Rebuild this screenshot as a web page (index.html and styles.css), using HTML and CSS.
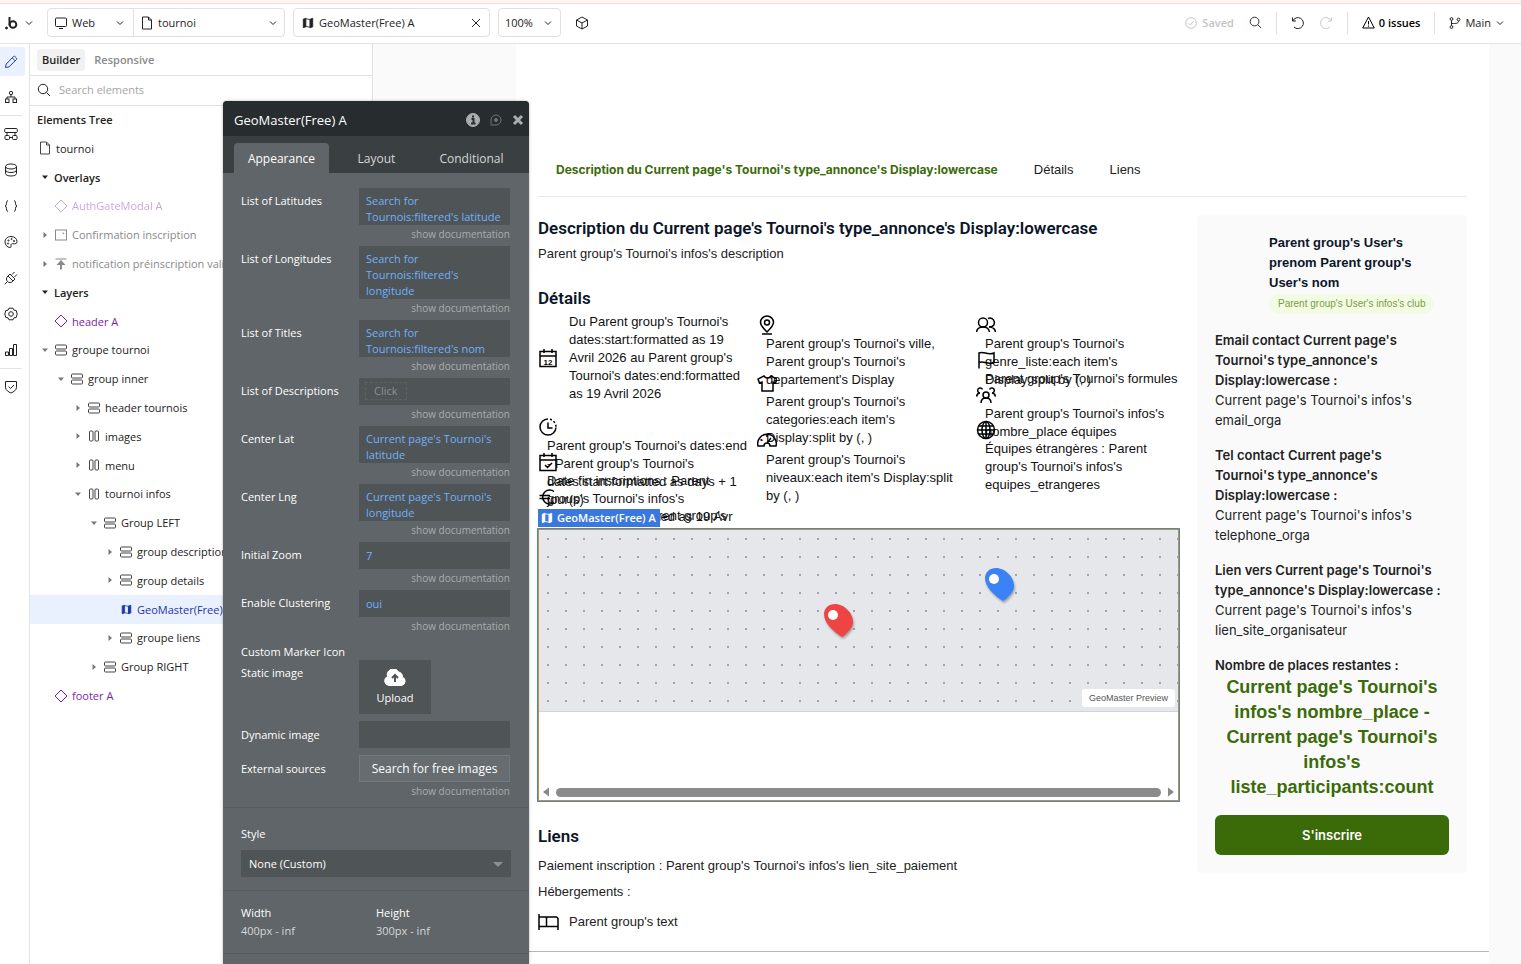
FILE: index.html
```html
<!DOCTYPE html>
<html lang="fr">
  <head>
    <meta charset="utf-8">
    <title>tournoi | Bubble Editor</title>
    <meta name="viewport" content="width=device-width,initial-scale=1">
    <link rel="stylesheet" href="styles.css">
  </head>
  <body>
    <!-- Shared icons -->
    <svg class="sprite" aria-hidden="true">
      <symbol id="chevron" viewBox="0 0 10 10"><path d="M2 3.500 5 6.500 8 3.500"/></symbol>
      <symbol id="page" viewBox="0 0 14 14"><path d="M2.500 1h6l3 3v9h-9zM8.500 1v3h3"/></symbol>
      <symbol id="map" viewBox="0 0 14 14"><path class="solid" d="M1.500 2.500 4.500 1.500v10l-3 1zM9.500 2.500l3-1v10l-3 1z"/><path d="M4.500 2l5 1M4.500 11l5 1M9.500 3v9"/></symbol>
      <symbol id="search" viewBox="0 0 14 14"><circle cx="6" cy="6" r="4.700"/><path d="M9.500 9.500 13 13"/></symbol>
      <symbol id="rows" viewBox="0 0 14 14"><rect x="1.500" y="2" width="11" height="4" rx="1"/><rect x="1.500" y="8" width="11" height="4" rx="1"/></symbol>
      <symbol id="cols" viewBox="0 0 14 14"><rect x="2.500" y="2" width="3.500" height="10" rx="1"/><rect x="8" y="2" width="3.500" height="10" rx="1"/></symbol>
      <symbol id="diamond" viewBox="0 0 14 14"><path d="M7 1l6 6-6 6-6-6z"/></symbol>
      <symbol id="open" viewBox="0 0 8 8"><path class="fill" d="M1 2.500h6L4 6z"/></symbol>
      <symbol id="closed" viewBox="0 0 8 8"><path class="fill" d="M2.500 1v6L6 4z"/></symbol>
    </svg>

    <div class="strip"></div>
    <header class="topbar">
      <button class="logo" aria-label="Menu">
        <svg width="14" height="14" viewBox="0 0 14 14"><path stroke-width="2" d="M4.500 1v8.500"/><circle cx="8" cy="8.500" r="3.300" stroke-width="2"/><circle class="solid" cx="1.500" cy="12" r="1"/></svg>
        <svg class="chev" width="10" height="10"><use href="#chevron"/></svg>
      </button>
      <div class="picker">
        <label class="picker-part picker-device">
          <svg width="14" height="14" viewBox="0 0 14 14"><rect x="1.500" y="2" width="11" height="8.500" rx="1"/><path d="M5 12.500h4"/></svg>
          <select aria-label="Device"><option>Web</option></select>
          <svg class="chev" width="10" height="10"><use href="#chevron"/></svg>
        </label>
        <label class="picker-part picker-page">
          <svg width="14" height="14"><use href="#page"/></svg>
          <select aria-label="Page"><option>tournoi</option></select>
          <svg class="chev" width="10" height="10"><use href="#chevron"/></svg>
        </label>
      </div>
      <div class="picker picker-element">
        <svg width="12" height="12"><use href="#map"/></svg>
        <input type="text" aria-label="Element" value="GeoMaster(Free) A">
        <button aria-label="Clear"><svg width="10" height="10" viewBox="0 0 10 10"><path d="M1 1l8 8M9 1 1 9"/></svg></button>
      </div>
      <label class="picker picker-zoom">
        <select aria-label="Zoom"><option>100%</option></select>
        <svg class="chev" width="10" height="10"><use href="#chevron"/></svg>
      </label>
      <button class="cube" aria-label="Components"><svg width="14" height="14" viewBox="0 0 14 14"><path d="M7 1l5.500 3v6L7 13l-5.500-3V4zM1.500 4 7 7l5.500-3M7 7v6"/></svg></button>
      <div class="actions">
        <span class="saved"><svg width="12" height="12" viewBox="0 0 12 12"><circle cx="6" cy="6" r="5.300"/><path d="M3.500 6.200 5.300 8l3.200-3.800"/></svg>Saved</span>
        <button aria-label="Search"><svg width="13" height="13"><use href="#search"/></svg></button>
        <span class="sep"></span>
        <button aria-label="Undo"><svg width="14" height="14" viewBox="0 0 14 14"><path d="M1.500 1.500V5H5M1.800 5A5.500 5.500 0 1 1 3 11"/></svg></button>
        <button class="redo" aria-label="Redo"><svg width="14" height="14" viewBox="0 0 14 14"><path d="M12.500 1.500V5H9M12.200 5A5.500 5.500 0 1 0 11 11"/></svg></button>
        <span class="sep"></span>
        <button class="issues"><svg width="13" height="13" viewBox="0 0 13 13"><path d="M6.500 1 12.300 12H.7zM6.500 5v3.500M6.500 9.500v1.200"/></svg>0 issues</button>
        <span class="sep"></span>
        <button class="branch">
          <svg width="12" height="12" viewBox="0 0 12 12"><circle cx="2.500" cy="2" r="1.400"/><circle cx="2.500" cy="10" r="1.400"/><circle cx="9.500" cy="2.500" r="1.400"/><path d="M2.500 3.500v5M9.500 4c0 2.500-2 2.500-7 2.500"/></svg>
          Main
          <svg class="chev" width="10" height="10"><use href="#chevron"/></svg>
        </button>
      </div>
    </header>

    <div class="workspace">
      <nav class="rail">
        <button class="rail-item active" aria-label="Design"><svg width="14" height="14" viewBox="0 0 14 14"><path d="M1.500 12.500l.7-3.400 7.300-7.600a1 1 0 0 1 1.400 0l1.600 1.600a1 1 0 0 1 0 1.400L5 11.900zM8.300 3l2.800 2.800"/></svg></button>
        <button class="rail-item" aria-label="Logic"><svg width="14" height="14" viewBox="0 0 14 14"><circle cx="7" cy="3" r="1.700"/><path d="M7 4.700V7M3 9V7h8v2"/><rect x="1.500" y="9" width="3.500" height="3.500"/><rect x="9" y="9" width="3.500" height="3.500"/></svg></button>
        <span class="rail-sep"></span>
        <button class="rail-item" aria-label="Data flow"><svg width="14" height="14" viewBox="0 0 14 14"><rect x=".7" y="1.500" width="12.600" height="4" rx="1"/><rect x="1" y="8.500" width="4.500" height="4" rx="1"/><rect x="8.500" y="8.500" width="4.500" height="4" rx="1"/><path d="M3 5.500v3M11 5.500v3M5.500 10.500h3"/></svg></button>
        <button class="rail-item" aria-label="Data"><svg width="14" height="14" viewBox="0 0 14 14"><ellipse cx="7" cy="3.500" rx="5.500" ry="2.500"/><path d="M1.500 3.500v7C1.500 12 4 13 7 13s5.500-1 5.500-2.500v-7M1.500 7C1.500 8.500 4 9.500 7 9.500s5.500-1 5.500-2.500"/></svg></button>
        <button class="rail-item" aria-label="Code"><svg width="14" height="14" viewBox="0 0 14 14"><path d="M4 1.500C1.500 1.500 3.500 7 1 7c2.500 0 .5 5.500 3 5.500M10 1.500c2.500 0 .5 5.500 3 5.500-2.500 0-.5 5.500-3 5.500"/></svg></button>
        <button class="rail-item" aria-label="Styles"><svg width="14" height="14" viewBox="0 0 14 14"><path d="M7 1.500c-3.500 0-6 2.500-6 5.500s2.500 5.500 5 5.500c1.500 0 1-1.500 1-2.500s1-1.500 2-1.300c2.500.3 4 0 4-2C13 3.500 10.500 1.500 7 1.500z"/><circle cx="4.500" cy="5.500" r=".6"/><circle cx="7.500" cy="4" r=".6"/><circle cx="10" cy="6" r=".6"/><circle cx="4" cy="8.500" r=".6"/></svg></button>
        <button class="rail-item" aria-label="Plugins"><svg width="14" height="14" viewBox="0 0 14 14"><path d="M4 5l5 5c-2 2-4 2-5.500.5S2 7 4 5zM3.500 10.500.8 13.200M4 5l2-2 5 5-2 2M8 3.500 10.500 1M10.500 6 13 3.500"/></svg></button>
        <button class="rail-item" aria-label="Settings"><svg width="14" height="14" viewBox="0 0 14 14"><path d="M5 1.200h4l1 2 2.200.3 1 3.500-1 3.500-2.200.3-1 2H5l-1-2-2.200-.3L.8 7l1-3.500L4 3.200z"/><circle cx="7" cy="7" r="2.300"/></svg></button>
        <button class="rail-item" aria-label="Logs"><svg width="14" height="14" viewBox="0 0 14 14"><path d="M1.500 12.500V9h3v3.500zM5.500 12.500v-7h3v7zM9.500 12.500v-11h3v11z"/></svg></button>
        <span class="rail-sep"></span>
        <button class="rail-item" aria-label="Security"><svg width="14" height="14" viewBox="0 0 14 14"><path d="M1.500 1.500h11v6c0 2.500-3 4.500-5.500 5.500-2.500-1-5.500-3-5.500-5.500zM4.500 6.500l2 2 3.500-3.500"/></svg></button>
      </nav>

      <aside class="tree-panel">
        <div class="modes">
          <button class="mode active">Builder</button>
          <button class="mode">Responsive</button>
        </div>
        <label class="search">
          <svg width="14" height="14"><use href="#search"/></svg>
          <input type="text" placeholder="Search elements" aria-label="Search elements">
        </label>
        <h3 class="tree-title">Elements Tree</h3>
        <ul class="tree">
          <li class="root"><span class="icon"><svg width="14" height="14"><use href="#page"/></svg></span>tournoi</li>
          <li class="section"><span class="caret"><svg width="8" height="8"><use href="#open"/></svg></span>Overlays</li>
          <li class="reusable faded"><span class="caret"></span><span class="icon"><svg width="14" height="14"><use href="#diamond"/></svg></span>AuthGateModal A</li>
          <li class="hidden-el"><span class="caret"><svg width="8" height="8"><use href="#closed"/></svg></span><span class="icon"><svg width="14" height="14" viewBox="0 0 14 14"><rect x="1.500" y="2" width="11" height="10"/><path d="M8.500 5h1.200v1.200"/></svg></span>Confirmation inscription</li>
          <li class="hidden-el"><span class="caret"><svg width="8" height="8"><use href="#closed"/></svg></span><span class="icon"><svg width="14" height="14" viewBox="0 0 14 14"><path d="M1.500 2h11"/><path class="fill" d="M7 3l4.500 5H8v4.500H6V8H2.500z"/></svg></span>notification préinscription validée</li>
          <li class="section"><span class="caret"><svg width="8" height="8"><use href="#open"/></svg></span>Layers</li>
          <li class="reusable"><span class="caret"></span><span class="icon"><svg width="14" height="14"><use href="#diamond"/></svg></span>header A</li>
          <li><span class="caret"><svg width="8" height="8"><use href="#open"/></svg></span><span class="icon"><svg width="14" height="14"><use href="#rows"/></svg></span>groupe tournoi</li>
          <li class="level-2"><span class="caret"><svg width="8" height="8"><use href="#open"/></svg></span><span class="icon"><svg width="14" height="14"><use href="#rows"/></svg></span>group inner</li>
          <li class="level-3"><span class="caret"><svg width="8" height="8"><use href="#closed"/></svg></span><span class="icon"><svg width="14" height="14"><use href="#rows"/></svg></span>header tournois</li>
          <li class="level-3"><span class="caret"><svg width="8" height="8"><use href="#closed"/></svg></span><span class="icon"><svg width="14" height="14"><use href="#cols"/></svg></span>images</li>
          <li class="level-3"><span class="caret"><svg width="8" height="8"><use href="#closed"/></svg></span><span class="icon"><svg width="14" height="14"><use href="#cols"/></svg></span>menu</li>
          <li class="level-3"><span class="caret"><svg width="8" height="8"><use href="#open"/></svg></span><span class="icon"><svg width="14" height="14"><use href="#cols"/></svg></span>tournoi infos</li>
          <li class="level-4"><span class="caret"><svg width="8" height="8"><use href="#open"/></svg></span><span class="icon"><svg width="14" height="14"><use href="#rows"/></svg></span>Group LEFT</li>
          <li class="level-5"><span class="caret"><svg width="8" height="8"><use href="#closed"/></svg></span><span class="icon"><svg width="14" height="14"><use href="#rows"/></svg></span>group description</li>
          <li class="level-5"><span class="caret"><svg width="8" height="8"><use href="#closed"/></svg></span><span class="icon"><svg width="14" height="14"><use href="#rows"/></svg></span>group details</li>
          <li class="level-5 selected"><span class="caret"></span><span class="icon"><svg width="11" height="11"><use href="#map"/></svg></span>GeoMaster(Free) A</li>
          <li class="level-5"><span class="caret"><svg width="8" height="8"><use href="#closed"/></svg></span><span class="icon"><svg width="14" height="14"><use href="#rows"/></svg></span>groupe liens</li>
          <li class="level-4"><span class="caret"><svg width="8" height="8"><use href="#closed"/></svg></span><span class="icon"><svg width="14" height="14"><use href="#rows"/></svg></span>Group RIGHT</li>
          <li class="reusable"><span class="caret"></span><span class="icon"><svg width="14" height="14"><use href="#diamond"/></svg></span>footer A</li>
        </ul>
      </aside>

      <div class="canvas">
        <main class="page">
          <nav class="page-nav">
            <a href="#description" class="current">Description du Current page's Tournoi's type_annonce's Display:lowercase</a>
            <a href="#details">Détails</a>
            <a href="#liens">Liens</a>
          </nav>
          <div class="columns">
            <div class="left">
              <h2 id="description">Description du Current page's Tournoi's type_annonce's Display:lowercase</h2>
              <p class="description">Parent group's Tournoi's infos's description</p>
              <h2 id="details" class="spaced">Détails</h2>

              <!-- Items have a fixed height, long texts run over the next one -->
              <div class="details">
                <div class="details-col">
                  <div class="detail-wide">
                    <svg width="20" height="20" viewBox="0 0 20 20"><path d="M2 3.500h16v15H2zM2 8h16M6 1v4M14 1v4"/><text class="day" x="10" y="16.500" text-anchor="middle">12</text></svg>
                    <p>Du Parent group's Tournoi's dates:start:formatted as 19 Avril 2026 au Parent group's Tournoi's dates:end:formatted as 19 Avril 2026</p>
                  </div>
                  <div class="detail">
                    <svg width="20" height="20" viewBox="0 0 20 20"><path d="M10 2a8 8 0 1 0 8 8.500"/><path d="M10 5.500V11h4.500"/><path stroke-dasharray="2 2" d="M12 2.300a8 8 0 0 1 6 7.500"/></svg>
                    <p>Parent group's Tournoi's dates:end - Parent group's Tournoi's dates:start:formatted as days + 1 jour(s)</p>
                  </div>
                  <div class="detail">
                    <svg width="20" height="20" viewBox="0 0 20 20"><path d="M2 3.500h16v15H2zM2 8h16M6 1v4M14 1v4M7 13l2.500 2.500L14 11"/></svg>
                    <p>Date fin inscriptions : Parent group's Tournoi's infos's dates_limite:formatted as 19 Avr</p>
                  </div>
                  <div class="detail">
                    <svg width="20" height="20" viewBox="0 0 20 20"><path d="M16 4.500A7 7 0 1 0 16 15.500M1.500 8.500H12M1.500 11.500H12"/></svg>
                    <p>Prix inscription : Parent group's</p>
                  </div>
                </div>
                <div class="details-col tall">
                  <div class="detail">
                    <svg width="20" height="20" viewBox="0 0 20 20"><path d="M10 17C6 13 3.500 10.500 3.500 7.500a6.500 6.500 0 0 1 13 0C16.500 10.500 14 13 10 17zM5 19h10"/><circle cx="10" cy="7.500" r="2.500"/></svg>
                    <p>Parent group's Tournoi's ville, Parent group's Tournoi's departement's Display</p>
                  </div>
                  <div class="detail">
                    <svg width="20" height="20" viewBox="0 0 20 20"><path d="M7 3 1 6l1.500 4L5 9v9h11V9l2.500 1L20 6l-6-3c-1.500 2.500-5.500 2.500-7 0z"/></svg>
                    <p>Parent group's Tournoi's categories:each item's Display:split by (, )</p>
                  </div>
                  <div class="detail">
                    <svg width="20" height="20" viewBox="0 0 20 20"><path d="M1 15a9.300 9.300 0 1 1 18 0h-6a3 3 0 0 0-6 0zM10 12l4-5M10 3.500V6M3.500 8.500l2 1.200"/></svg>
                    <p>Parent group's Tournoi's niveaux:each item's Display:split by (, )</p>
                  </div>
                </div>
                <div class="details-col">
                  <div class="detail">
                    <svg width="20" height="20" viewBox="0 0 20 20"><circle cx="7" cy="7.500" r="4.500"/><path d="M.5 17C1 14 3.500 12 7 12s6 2 6.500 5M12 3.500A4.500 4.500 0 1 1 13 12c3.500 0 6 2 6.500 5"/></svg>
                    <p>Parent group's Tournoi's genre_liste:each item's Display:split by (, )</p>
                  </div>
                  <div class="detail">
                    <svg width="20" height="20" viewBox="0 0 20 20"><path d="M3 18.500V3c5-2.500 8 3 15 0v9.500c-7 3-10-2.500-15 0"/></svg>
                    <p class="one-line">Parent group's Tournoi's formules</p>
                  </div>
                  <div class="detail">
                    <svg width="20" height="20" viewBox="0 0 20 20"><circle cx="10" cy="10" r="3"/><path d="M5 18c0-3 2-5 5-5s5 2 5 5M6.500 4.500A2.500 2.500 0 1 0 4 8c-2 0-3 1.500-3.500 3.500M13.500 4.500A2.500 2.500 0 1 1 16 8c2 0 3 1.500 3.500 3.500"/></svg>
                    <p>Parent group's Tournoi's infos's nombre_place équipes</p>
                  </div>
                  <div class="detail">
                    <svg width="20" height="20" viewBox="0 0 20 20"><circle cx="10" cy="10" r="8.500"/><ellipse cx="10" cy="10" rx="4" ry="8.500"/><path d="M10 1.500v17M1.500 10h17M3 6h14M3 14h14"/></svg>
                    <p>Équipes étrangères : Parent group's Tournoi's infos's equipes_etrangeres</p>
                  </div>
                </div>
              </div>

              <div class="geomaster">
                <span class="geomaster-tag"><svg width="12" height="12"><use href="#map"/></svg>GeoMaster(Free) A</span>
                <div class="geomaster-map">
                  <svg class="marker marker-red" width="29" height="33" viewBox="0 0 29 33"><path d="M18 33C9 27 0 19 0 10 0 4 5 0 11 0c9 0 18 9 18 18 0 5-5 11-11 15z"/><circle cx="9" cy="11" r="5"/></svg>
                  <svg class="marker marker-blue" width="29" height="33" viewBox="0 0 29 33"><path d="M18 33C9 27 0 19 0 10 0 4 5 0 11 0c9 0 18 9 18 18 0 5-5 11-11 15z"/><circle cx="9" cy="11" r="5"/></svg>
                  <span class="preview">GeoMaster Preview</span>
                </div>
                <div class="scrollbar">
                  <svg width="8" height="10" viewBox="0 0 8 10"><path d="M7 .5v9L1 5z"/></svg>
                  <span class="thumb"></span>
                  <svg width="8" height="10" viewBox="0 0 8 10"><path d="M1 .5v9L7 5z"/></svg>
                </div>
              </div>

              <h2 id="liens" class="spaced">Liens</h2>
              <p class="link-text">Paiement inscription : Parent group's Tournoi's infos's lien_site_paiement</p>
              <p class="link-text">Hébergements :</p>
              <div class="lodging">
                <svg width="21" height="20" viewBox="0 0 21 20"><path d="M1 2v16M1 14.500h19M20 18V6.500L18.500 5H1M8.500 5v9.500"/></svg>
                <span>Parent group's text</span>
              </div>
            </div>

            <aside class="card">
              <div class="owner">
                <h3>Parent group's User's prenom Parent group's User's nom</h3>
                <span class="club">Parent group's User's infos's club</span>
              </div>
              <dl>
                <dt>Email contact Current page's Tournoi's type_annonce's Display:lowercase :</dt>
                <dd>Current page's Tournoi's infos's email_orga</dd>
                <dt>Tel contact Current page's<br>Tournoi's type_annonce's Display:lowercase :</dt>
                <dd>Current page's Tournoi's infos's telephone_orga</dd>
                <dt>Lien vers Current page's Tournoi's type_annonce's Display:lowercase :</dt>
                <dd>Current page's Tournoi's infos's lien_site_organisateur</dd>
                <dt>Nombre de places restantes :</dt>
                <dd class="places">Current page's Tournoi's infos's nombre_place - Current page's Tournoi's infos's liste_participants:count</dd>
              </dl>
              <button class="signup">S'inscrire</button>
            </aside>
          </div>
        </main>
      </div>

      <!-- Floating property editor -->
      <section class="editor">
        <div class="editor-head">
          <h3>GeoMaster(Free) A</h3>
          <button aria-label="Info"><svg width="14" height="14" viewBox="0 0 14 14"><circle class="solid" cx="7" cy="7" r="6.500"/><path class="cut" d="M5.500 6h2v4.500M5 10.500h4.500M6 3.500h2"/></svg></button>
          <button class="comment" aria-label="Comment"><svg width="12" height="12" viewBox="0 0 12 12"><path d="M1 11V6a5 5 0 1 1 5 5z"/><circle class="solid" cx="6" cy="6" r="1.500"/></svg></button>
          <button aria-label="Close"><svg width="12" height="12" viewBox="0 0 12 12"><path stroke-width="3" d="M2 2l8 8M10 2l-8 8"/></svg></button>
        </div>
        <div class="editor-tabs">
          <button class="active">Appearance</button>
          <button>Layout</button>
          <button>Conditional</button>
        </div>
        <div class="fields">
          <label for="latitudes">List of Latitudes</label>
          <div class="field"><textarea id="latitudes" rows="2">Search for Tournois:filtered's latitude</textarea><a href="#doc">show documentation</a></div>
          <label for="longitudes">List of Longitudes</label>
          <div class="field"><textarea id="longitudes" rows="3">Search for Tournois:filtered's longitude</textarea><a href="#doc">show documentation</a></div>
          <label for="titles">List of Titles</label>
          <div class="field"><textarea id="titles" rows="2">Search for Tournois:filtered's nom</textarea><a href="#doc">show documentation</a></div>
          <label for="descriptions">List of Descriptions</label>
          <div class="field"><div class="empty"><button id="descriptions">Click</button></div><a href="#doc">show documentation</a></div>
          <label for="lat">Center Lat</label>
          <div class="field"><textarea id="lat" rows="2">Current page's Tournoi's latitude</textarea><a href="#doc">show documentation</a></div>
          <label for="lng">Center Lng</label>
          <div class="field"><textarea id="lng" rows="2">Current page's Tournoi's longitude</textarea><a href="#doc">show documentation</a></div>
          <label for="zoom">Initial Zoom</label>
          <div class="field"><input id="zoom" type="text" value="7"><a href="#doc">show documentation</a></div>
          <label for="clustering">Enable Clustering</label>
          <div class="field"><input id="clustering" type="text" value="oui"><a href="#doc">show documentation</a></div>
        </div>
        <div class="image-fields">
          <div class="image-label"><span>Custom Marker Icon</span><label for="upload">Static image</label></div>
          <button id="upload" class="upload">
            <svg width="22" height="17" viewBox="0 0 22 17"><path class="solid" d="M5 16.500a4.700 4.700 0 0 1-1.500-9A6 6 0 0 1 14.500 3a4.500 4.500 0 0 1 4 5A4.500 4.500 0 0 1 17.500 16.500z"/><path class="cut" d="M11 13V6.500M8 9l3-3 3 3"/></svg>
            Upload
          </button>
          <label for="dynamic">Dynamic image</label>
          <input id="dynamic" type="text">
          <label for="external">External sources</label>
          <div class="field"><button id="external" class="free-images">Search for free images</button><a href="#doc">show documentation</a></div>
        </div>
        <div class="style-block">
          <label for="style">Style</label>
          <div class="style-select">
            <select id="style"><option>None (Custom)</option></select>
            <svg width="10" height="10" viewBox="0 0 10 10"><path d="M0 3h10L5 8z"/></svg>
          </div>
        </div>
        <dl class="size">
          <div><dt>Width</dt><dd>400px - inf</dd></div>
          <div><dt>Height</dt><dd>300px - inf</dd></div>
        </dl>
        <div class="editor-rest"></div>
      </section>
    </div>
  </body>
</html>
```
FILE: styles.css
```css
* {
  box-sizing: border-box;
}

body {
  margin: 0;
  height: 100vh;
  display: flex;
  flex-direction: column;
  overflow: hidden;
  font-family: "Open Sans", "Noto Sans", sans-serif;
  font-size: 11px;
  color: #222;
  background: #fff;
}

button, input, select, textarea {
  font: inherit;
  color: inherit;
  background: none;
  border: 0;
  padding: 0;
  margin: 0;
  outline: 0;
}

select {
  appearance: none;
}

h2, h3, p, ul, dl, dd {
  margin: 0;
  padding: 0;
}

a {
  color: inherit;
  text-decoration: none;
}

svg {
  display: block;
  flex: none;
  fill: none;
  stroke: currentColor;
}

.solid {
  fill: currentColor;
}

.fill {
  fill: currentColor;
  stroke: none;
}

.sprite {
  width: 0;
  height: 0;
  position: absolute;
}

/* Top bar */
.strip {
  height: 4px;
  background: #fff4f2;
  border-bottom: 1px solid #e3e3e3;
}

.topbar {
  height: 40px;
  display: flex;
  align-items: center;
  padding: 0 16px 2px 5px;
  border-bottom: 1px solid #e3e3e3;
}

.logo {
  display: flex;
  align-items: center;
  gap: 5px;
  margin-right: 13px;
}

.picker {
  display: flex;
  align-items: center;
  height: 29px;
  margin-right: 8px;
  border: 1px solid #e0e0e0;
  border-radius: 4px;
}

.picker-part {
  display: flex;
  align-items: center;
  gap: 4px;
  height: 100%;
  padding: 0 6px;
}

.picker select, .picker input {
  flex: 1;
  min-width: 0;
}

.picker-device {
  width: 86px;
  padding-right: 8px;
  border-right: 1px solid #e0e0e0;
}

.picker-page {
  width: 150px;
}

.picker-element {
  width: 197px;
  gap: 5px;
  padding: 0 8px;
}

.picker-zoom {
  width: 63px;
  padding: 0 7px 0 6px;
}

.cube {
  margin-left: 6px;
}

.actions {
  display: flex;
  align-items: center;
  gap: 14px;
  margin-left: auto;
}

.saved {
  display: flex;
  align-items: center;
  gap: 5px;
  margin-right: 1px;
  color: #c4c4c4;
  font-weight: 600;
}

.redo {
  color: #c9c9c9;
}

.sep {
  width: 1px;
  height: 22px;
  background: #e0e0e0;
}

.issues, .branch {
  display: flex;
  align-items: center;
  gap: 4px;
}

.issues {
  color: #000;
  font-weight: 600;
}

/* Icon rail */
.workspace {
  flex: 1;
  min-height: 0;
  display: flex;
}

.rail {
  width: 30px;
  display: flex;
  flex-direction: column;
  border-right: 1px solid #e3e3e3;
}

.rail-item {
  display: flex;
  align-items: center;
  width: 25px;
  height: 36px;
  padding-left: 4px;
}

.rail-item.active {
  height: 29px;
  margin: 3px 0;
  color: #2a3ab5;
  background: #e8f1fd;
  border-radius: 0 3px 3px 0;
}

.rail-sep {
  width: 22px;
  height: 1px;
  background: #e3e3e3;
}

/* Elements tree */
.tree-panel {
  width: 343px;
  flex: none;
  border-right: 1px solid #e3e3e3;
}

.modes {
  display: flex;
  align-items: center;
  gap: 4px;
  height: 32px;
  padding: 0 7px;
  border-bottom: 1px solid #e3e3e3;
}

.mode {
  height: 22px;
  padding: 0 5px;
  border-radius: 3px;
  font-weight: 600;
  color: #8a8a8a;
}

.mode.active {
  color: #222;
  background: #f1f1f1;
}

.search {
  display: flex;
  align-items: center;
  gap: 8px;
  height: 30px;
  padding: 0 7px 2px;
  border-bottom: 1px solid #e3e3e3;
}

.search input::placeholder {
  color: #a5a5a5;
}

.tree-title {
  padding: 5px 7px 6px;
  font-size: 11px;
  line-height: 17px;
  font-weight: 600;
}

.tree {
  list-style: none;
  display: grid;
  grid-auto-rows: 1fr;
  height: 576px;
}

.tree li {
  display: flex;
  align-items: center;
  padding-left: 7px;
  white-space: nowrap;
}

.tree .level-2 {
  padding-left: 23px;
}

.tree .level-3 {
  padding-left: 40px;
}

.tree .level-4 {
  padding-left: 56px;
}

.tree .level-5 {
  padding-left: 72px;
}

.caret, .icon {
  display: flex;
  justify-content: center;
  width: 16px;
}

.caret {
  color: #777;
}

.icon {
  margin-right: 3px;
  color: #444;
}

.section {
  font-weight: 600;
}

.section .caret {
  color: #222;
  margin-right: 1px;
}

.reusable, .reusable .icon {
  color: #7a1fa2;
}

.faded {
  opacity: 0.4;
}

.hidden-el, .hidden-el .icon {
  color: #8a8a8a;
}

.tree .selected, .selected .icon {
  color: #1f35a8;
}

.tree .selected {
  background: #e8f1fd;
}

/* Canvas and the page that is edited */
.canvas {
  flex: 1;
  min-width: 0;
  padding: 0 32px 0 143px;
  background: #fafafa;
  overflow: hidden;
}

.page {
  height: 908px;
  padding: 99px 22px 0;
  background: #fff;
  border-bottom: 1px solid #b5b5b5;
  box-shadow: 0 100px #fff;
  font-family: "Liberation Sans", Arial, sans-serif;
  font-size: 13px;
  line-height: 18px;
}

.page-nav {
  display: flex;
  align-items: center;
  gap: 36px;
  height: 54px;
  padding: 0 18px;
  border-bottom: 1px solid #e8e8e8;
}

.page-nav .current {
  font-family: Inter, sans-serif;
  font-size: 12px;
  font-weight: bold;
  color: #3a6b08;
}

.columns {
  display: flex;
  align-items: flex-start;
  gap: 18px;
  margin-top: 18px;
}

.left {
  flex: 1;
  min-width: 0;
}

.left h2 {
  font-family: Roboto, sans-serif;
  font-size: 17px;
  line-height: 26px;
  font-weight: 600;
  color: #0b1529;
}

.left .spaced {
  margin-top: 22px;
}

.description {
  margin-top: 4px;
}

.details {
  display: grid;
  grid-template-columns: 210px 210px 1fr;
  column-gap: 9px;
  height: 218px;
  padding-top: 4px;
  color: #111;
}

.details svg, .lodging svg {
  stroke: #000;
  stroke-width: 1.5;
}

.details .day {
  font: bold 8px "Liberation Sans", sans-serif;
  fill: #000;
  stroke: none;
}

.detail-wide {
  display: flex;
  align-items: center;
  gap: 11px;
  height: 86px;
  margin-bottom: 16px;
}

.detail {
  height: 35px;
}

.detail p {
  padding-left: 9px;
}

.detail .one-line {
  white-space: nowrap;
}

.tall .detail {
  height: 58px;
}

.geomaster {
  position: relative;
  height: 272px;
  display: flex;
  flex-direction: column;
  border: 1px solid #d08a3c;
  outline: 1px solid #3d8fbd;
}

.geomaster-tag {
  position: absolute;
  left: -1px;
  top: -21px;
  display: flex;
  align-items: center;
  gap: 4px;
  height: 18px;
  padding: 0 4px 0 3px;
  color: #fff;
  background: #3b78de;
  font-family: "Open Sans", sans-serif;
  font-size: 11px;
  font-weight: 600;
}

.geomaster-map {
  position: relative;
  height: 182px;
  background: radial-gradient(circle, #9ca3af 1px, transparent 1px) 0 0 / 18px 18px #e5e7eb;
  border-bottom: 1px solid #d1d5db;
}

.marker {
  position: absolute;
  stroke: none;
  filter: drop-shadow(1px 2px 1px rgba(0, 0, 0, 0.3));
}

.marker circle {
  fill: #fff;
}

.marker-red {
  left: 285px;
  top: 74px;
  fill: #ef4444;
}

.marker-blue {
  left: 446px;
  top: 38px;
  fill: #3b82f6;
}

.preview {
  position: absolute;
  right: 3px;
  bottom: 4px;
  padding: 0 7px;
  border-radius: 3px;
  background: #fff;
  color: #555;
  font-size: 9px;
  line-height: 18px;
}

.scrollbar {
  display: flex;
  align-items: center;
  gap: 6px;
  margin-top: auto;
  padding: 0 3px 3px;
  color: #888;
}

.scrollbar svg {
  fill: #888;
  stroke: none;
}

.thumb {
  flex: 1;
  height: 9px;
  border-radius: 5px;
  background: #8b8b8b;
}

.link-text {
  margin-top: 8px;
}

.lodging {
  display: flex;
  align-items: center;
  gap: 10px;
  margin-top: 11px;
}

/* Right card */
.card {
  width: 270px;
  padding: 18px;
  border-radius: 4px;
  background: #fafafa;
  font-size: 13px;
  line-height: 20px;
}

.owner {
  padding-left: 54px;
}

.owner h3 {
  font-size: 13px;
  color: #0b1529;
}

.club {
  display: inline-block;
  padding: 0 9px;
  border-radius: 10px;
  background: #f4fbe4;
  color: #76a03c;
  font-size: 10px;
  white-space: nowrap;
}

.card dl {
  margin-top: 16px;
  font-family: Inter, sans-serif;
}

.card dt {
  font-weight: 600;
}

.card dd {
  margin-bottom: 15px;
}

.card .places {
  font-family: "Liberation Sans", Arial, sans-serif;
  font-size: 18px;
  line-height: 25px;
  font-weight: bold;
  text-align: center;
  color: #3a6b08;
}

.signup {
  width: 100%;
  height: 40px;
  border-radius: 6px;
  background: #3a6b08;
  color: #fff;
  font-family: Inter, sans-serif;
  font-size: 13px;
  font-weight: 600;
}

/* Property editor floats over tree and canvas */
.editor {
  position: absolute;
  left: 223px;
  top: 101px;
  bottom: 0;
  width: 306px;
  display: flex;
  flex-direction: column;
  border-radius: 4px 4px 0 0;
  overflow: hidden;
  background: #5f6568;
  color: #fff;
  box-shadow: 0 0 3px rgba(0, 0, 0, 0.3);
}

.editor-head {
  display: flex;
  align-items: center;
  gap: 10px;
  height: 35px;
  padding: 2px 5px 0 11px;
  background: #272d2f;
  color: #a9adaf;
  flex: none;
}

.editor-head h3 {
  flex: 1;
  font-size: 13px;
  font-weight: normal;
  color: #fff;
}

.editor-head .comment {
  color: #6f7577;
}

.cut {
  stroke: #272d2f;
  stroke-width: 2;
}

.editor-tabs {
  display: grid;
  grid-template-columns: repeat(3, 95px);
  height: 37px;
  padding: 7px 0 0 11px;
  background: #3a3f42;
  font-size: 12px;
  flex: none;
}

.editor-tabs button {
  color: #d5d7d8;
}

.editor-tabs .active {
  color: #fff;
  background: #5f6568;
  border-radius: 4px 4px 0 0;
}

.fields, .image-fields {
  display: grid;
  grid-template-columns: 118px 151px;
  padding: 15px 18px 0;
  line-height: 16px;
}

.fields > label {
  padding-top: 5px;
}

.field {
  display: flex;
  flex-direction: column;
  padding-bottom: 3px;
}

.field textarea, .field input, .empty, .image-fields input {
  display: block;
  padding: 5px 7px 0;
  line-height: 16px;
  background: #4f5456;
  color: #6fb1fc;
  resize: none;
  overflow: hidden;
}

.field input, .empty, .image-fields input {
  height: 27px;
  padding-bottom: 6px;
}

.empty button {
  padding: 0 8px;
  outline: 1px dashed #5c6163;
  color: #8d9193;
}

.field a {
  align-self: flex-end;
  font-size: 10px;
  line-height: 18px;
  color: #a9adaf;
}

.image-fields {
  padding-top: 6px;
  row-gap: 7px;
}

.image-fields > label {
  padding-top: 6px;
}

.image-label {
  display: flex;
  flex-direction: column;
  gap: 5px;
}

.upload {
  display: flex;
  flex-direction: column;
  align-items: center;
  justify-content: center;
  gap: 4px;
  width: 72px;
  height: 54px;
  margin-top: 16px;
  background: #4f5456;
}

.upload .cut {
  stroke: #4f5456;
}

.free-images {
  height: 27px;
  border: 1px solid #74797b;
  background: #666c6f;
  font-size: 12px;
}

.style-block {
  margin-top: 4px;
  padding: 18px 18px 13px;
  border-top: 1px solid #565c5e;
  border-bottom: 1px solid #565c5e;
  line-height: 16px;
}

.style-select {
  display: flex;
  align-items: center;
  height: 27px;
  margin-top: 8px;
  padding: 0 8px;
  background: #4f5456;
}

.style-select select {
  flex: 1;
}

.style-select svg {
  stroke: none;
  fill: #8d9193;
}

.size {
  display: grid;
  grid-template-columns: 135px 1fr;
  padding: 13px 18px;
  line-height: 18px;
}

.size dd {
  color: #d5d7d8;
}

.editor-rest {
  flex: 1;
  border-top: 1px solid #565c5e;
}
```
